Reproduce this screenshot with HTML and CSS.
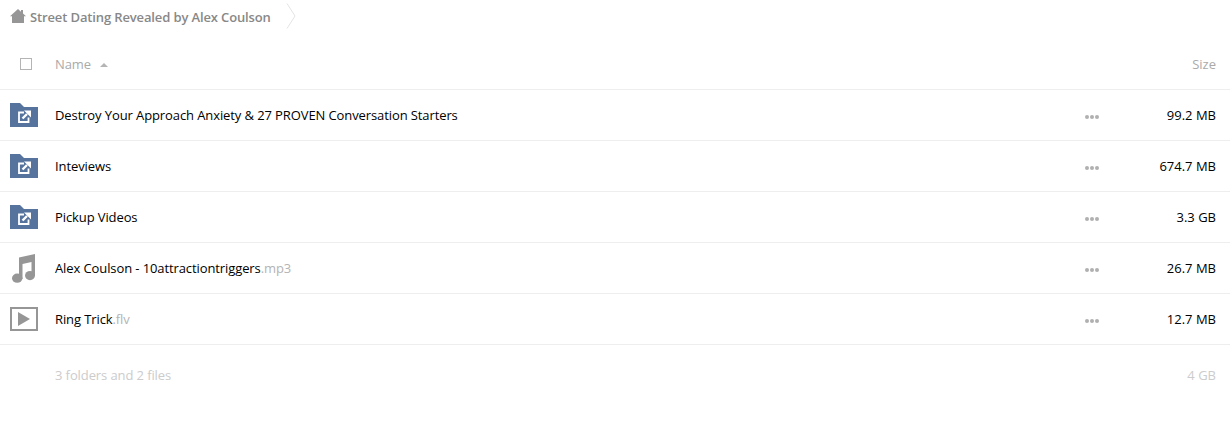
FILE: index.html
```html
<!DOCTYPE html>
<html lang="en">
<head>
    <meta charset="UTF-8">
    <title>Street Dating Revealed by Alex Coulson</title>
    <link rel="stylesheet" href="styles.css">
</head>
<body>
    <div class="breadcrumb">
        <svg class="home-icon" width="16" height="14" viewBox="0 0 16 14"><path d="M8 0 L11 2.7 V1 H13 V4.5 L16 7.2 H14 V14 H2 V7.2 H0 Z" fill="#969696"/></svg>
        <span class="crumb-text">Street Dating Revealed by Alex Coulson</span>
        <svg class="crumb-sep" width="10" height="26" viewBox="0 0 10 26"><path d="M1 0.5 L9 13 L1 25.5" fill="none" stroke="#e4e4e4"/></svg>
    </div>

    <div class="list-head">
        <div class="col-check"><span class="checkbox"></span></div>
        <div class="col-name">Name <span class="sort-arrow"></span></div>
        <div class="col-size">Size</div>
    </div>

    <div class="row">
        <div class="col-icon">
            <svg width="28" height="24" viewBox="0 0 28 24"><use href="#folder"/></svg>
        </div>
        <div class="col-name">Destroy Your Approach Anxiety &amp; 27 PROVEN Conversation Starters</div>
        <div class="col-more"><span></span><span></span><span></span></div>
        <div class="col-size">99.2 MB</div>
    </div>
    <div class="row">
        <div class="col-icon">
            <svg width="28" height="24" viewBox="0 0 28 24"><use href="#folder"/></svg>
        </div>
        <div class="col-name">Inteviews</div>
        <div class="col-more"><span></span><span></span><span></span></div>
        <div class="col-size">674.7 MB</div>
    </div>
    <div class="row">
        <div class="col-icon">
            <svg width="28" height="24" viewBox="0 0 28 24"><use href="#folder"/></svg>
        </div>
        <div class="col-name">Pickup Videos</div>
        <div class="col-more"><span></span><span></span><span></span></div>
        <div class="col-size">3.3 GB</div>
    </div>
    <div class="row">
        <div class="col-icon icon-music">
            <svg width="24" height="29" viewBox="0 0 24 29"><path d="M7 3.5 L23 0 V22 H19.5 V8 L10.5 10 V25 H7 Z" fill="#969696"/><ellipse cx="5.2" cy="24.2" rx="5.2" ry="4.6" fill="#969696"/><ellipse cx="18" cy="21.6" rx="5" ry="4.6" fill="#969696"/></svg>
        </div>
        <div class="col-name">Alex Coulson - 10attractiontriggers<span class="ext">.mp3</span></div>
        <div class="col-more"><span></span><span></span><span></span></div>
        <div class="col-size">26.7 MB</div>
    </div>
    <div class="row">
        <div class="col-icon">
            <svg width="28" height="24" viewBox="0 0 28 24"><rect x="1" y="1" width="26" height="22" fill="none" stroke="#969696" stroke-width="2"/><path d="M8 5 L20 12 L8 19 Z" fill="#969696"/></svg>
        </div>
        <div class="col-name">Ring Trick<span class="ext">.flv</span></div>
        <div class="col-more"><span></span><span></span><span></span></div>
        <div class="col-size">12.7 MB</div>
    </div>

    <div class="summary">
        <div class="col-name">3 folders and 2 files</div>
        <div class="col-size">4 GB</div>
    </div>

    <svg class="defs" width="0" height="0">
        <defs>
            <g id="folder">
                <path d="M0 24 V0 H10 L14 4 H28 V24 Z" fill="#55739c"/>
                <path d="M14 9.5 H9 V19 H18.5 V14.5" fill="none" stroke="#fff" stroke-width="1.8"/>
                <path d="M12.5 15.5 L17 11" fill="none" stroke="#fff" stroke-width="2.4"/>
                <path d="M21 7.5 V14.5 L14 7.5 Z" fill="#fff"/>
            </g>
        </defs>
    </svg>
</body>
</html>
```

FILE: styles.css
```css
* { margin: 0; padding: 0; box-sizing: border-box; }

body {
    font-family: "Open Sans", "Liberation Sans", sans-serif;
    font-size: 13px;
    color: #000;
    background: #fff;
}

.breadcrumb {
    display: flex;
    align-items: center;
    height: 33px;
    padding: 1px 0 0 10px;
    color: #888;
    font-weight: 600;
    letter-spacing: -0.13px;
}

.home-icon { margin-right: 4px; margin-top: -2px; }

.crumb-sep { margin-left: 15px; margin-top: -3px; }

.list-head {
    display: flex;
    align-items: center;
    height: 57px;
    padding-top: 6px;
    border-bottom: 1px solid #eee;
    color: #aaa;
}

.col-check {
    width: 55px;
    padding-left: 20px;
    display: flex;
}

.checkbox {
    width: 12px;
    height: 12px;
    border: 1px solid #b4b4b4;
}

.col-name {
    flex: 1;
    letter-spacing: -0.1px;
}

.sort-arrow {
    display: inline-block;
    width: 0;
    height: 0;
    margin-left: 6px;
    vertical-align: 2px;
    border-left: 4px solid transparent;
    border-right: 4px solid transparent;
    border-bottom: 4px solid #b4b4b4;
}

.col-size {
    width: 120px;
    padding-right: 14px;
    text-align: right;
}

.row {
    display: flex;
    align-items: center;
    height: 51px;
    border-bottom: 1px solid #eee;
}

.col-icon {
    width: 55px;
    padding-left: 10px;
    display: flex;
}

.col-icon svg { display: block; }

.icon-music { padding-left: 12px; }

.col-more {
    display: flex;
    gap: 1px;
    width: 14px;
    margin: 3px 11px 0 0;
}

.col-more span {
    width: 4px;
    height: 4px;
    border-radius: 50%;
    background: #b0b0b0;
}

.ext { color: #b4b4b4; }

.summary {
    display: flex;
    align-items: center;
    height: 60px;
    padding-left: 55px;
    color: #ccc;
}

.defs { position: absolute; }
```
